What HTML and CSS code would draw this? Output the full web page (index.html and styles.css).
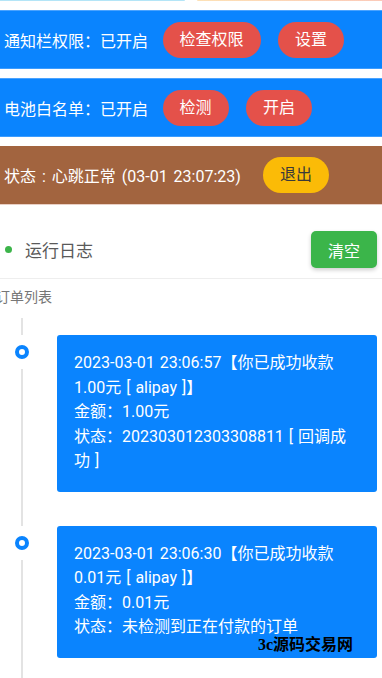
FILE: index.html
```html
<!DOCTYPE html>
<html>
<head>
  <meta charset="utf-8">
  <title>监控</title>
  <link rel="stylesheet" href="styles.css">
</head>
<body>

  <div class="peek">
    <span class="peek-blue"></span>
    <span class="peek-orange"></span>
  </div>

  <div class="bar bar-blue">
    <span class="bar-text">通知栏权限：已开启</span>
    <button class="pill pill-red">检查权限</button>
    <button class="pill pill-red">设置</button>
  </div>

  <div class="bar bar-blue">
    <span class="bar-text">电池白名单：已开启</span>
    <button class="pill pill-red">检测</button>
    <button class="pill pill-red">开启</button>
  </div>

  <div class="bar bar-brown">
    <span class="bar-text">状态 : 心跳正常 (03-01 23:07:23)</span>
    <button class="pill pill-yellow">退出</button>
  </div>

  <div class="log-head">
    <span class="dot"></span>
    <span class="log-title">运行日志</span>
    <button class="btn-clear">清空</button>
  </div>

  <div class="section-label">订单列表</div>

  <div class="timeline">
    <div class="tl-item">
      <span class="tl-marker"></span>
      <div class="tl-card">
        2023-03-01 23:06:57【你已成功收款1.00元 [ alipay ]】<br>
        金额：1.00元<br>
        状态：202303012303308811 [ 回调成功 ]
      </div>
    </div>
    <div class="tl-item">
      <span class="tl-marker"></span>
      <div class="tl-card">
        2023-03-01 23:06:30【你已成功收款0.01元 [ alipay ]】<br>
        金额：0.01元<br>
        状态：未检测到正在付款的订单
      </div>
    </div>
  </div>

  <div class="watermark">3c源码交易网</div>

</body>
</html>
```

FILE: styles.css
```css
body {
  margin: 0;
  font-family: Roboto, "Noto Sans CJK SC", sans-serif;
  background: #fff;
  overflow: hidden;
  position: relative;
  height: 678px;
}
.peek {
  display: flex;
  justify-content: space-between;
  height: 1px;
}
.peek-blue {
  width: 185px;
  background: #b4e5f7;
  border-radius: 0 0 4px 0;
}
.peek-orange {
  width: 185px;
  background: linear-gradient(90deg, #fde1b6, #fbcab9);
  border-radius: 0 0 0 4px;
}

.bar {
  box-sizing: border-box;
  height: 59px;
  margin-top: 9px;
  display: flex;
  align-items: center;
  gap: 17.5px;
  padding-left: 4px;
  color: #fff;
  font-size: 16px;
}
.bar-text {
  margin-right: -3px;
}
.bar-blue {
  background: #0a84fe;
  border-top: 1px solid #4aa3ff;
  border-bottom: 1px solid #3b9cff;
}
.bar-brown {
  background: #a2643f;
  border-bottom: 1px solid #e9cfc4;
  gap: 25px;
}
.bar-brown .bar-text {
  word-spacing: 2px;
}
.pill {
  height: 36px;
  padding: 0 17px;
  border: none;
  border-radius: 18px;
  font-family: inherit;
  font-size: 16px;
  line-height: 36px;
}
.pill-red {
  background: #e4514a;
  color: #fff;
}
.pill-yellow {
  background: #fbbb07;
  color: #3a3a3a;
}

.log-head {
  display: flex;
  align-items: center;
  padding: 26px 5px 10px 5px;
  border-bottom: 1px solid #eeeeee;
}
.dot {
  width: 7px;
  height: 7px;
  border-radius: 50%;
  background: #3cb44a;
}
.log-title {
  margin-left: 13px;
  flex: 1;
  font-size: 17px;
  color: #5a5a5a;
}
.btn-clear {
  width: 66px;
  height: 37px;
  border: none;
  border-radius: 5px;
  background: #3bb54a;
  color: #fff;
  font-family: inherit;
  font-size: 16px;
  box-shadow: 0 2px 4px rgba(0,0,0,0.2);
}

.section-label {
  margin: 8px 0 0 -4px;
  font-size: 14px;
  line-height: 20px;
  color: #777;
}

.timeline {
  position: relative;
  margin-top: 11px;
  padding-top: 17px;
}
.timeline::before {
  content: "";
  position: absolute;
  left: 21px;
  top: 0;
  width: 2px;
  height: 400px;
  background: #e3e3e3;
}
.tl-item {
  display: flex;
  align-items: flex-start;
  margin-bottom: 34px;
}
.tl-marker {
  position: relative;
  box-sizing: border-box;
  width: 14px;
  height: 14px;
  margin: 10px 28px 0 15px;
  border: 4px solid #0a84fe;
  border-radius: 50%;
  background: #fff;
  box-shadow: 0 0 0 10px #fff;
}
.tl-card {
  flex: 1;
  margin-right: 5px;
  padding: 16px 22px 18px 17px;
  background: #0a84fe;
  border-radius: 3px;
  color: #fff;
  font-size: 16px;
  line-height: 24.5px;
  word-spacing: 1px;
}

.watermark {
  position: absolute;
  left: 258px;
  top: 631px;
  font-family: "Liberation Serif", "Noto Sans CJK SC", serif;
  font-weight: bold;
  font-size: 16px;
  color: #000;
}
```
